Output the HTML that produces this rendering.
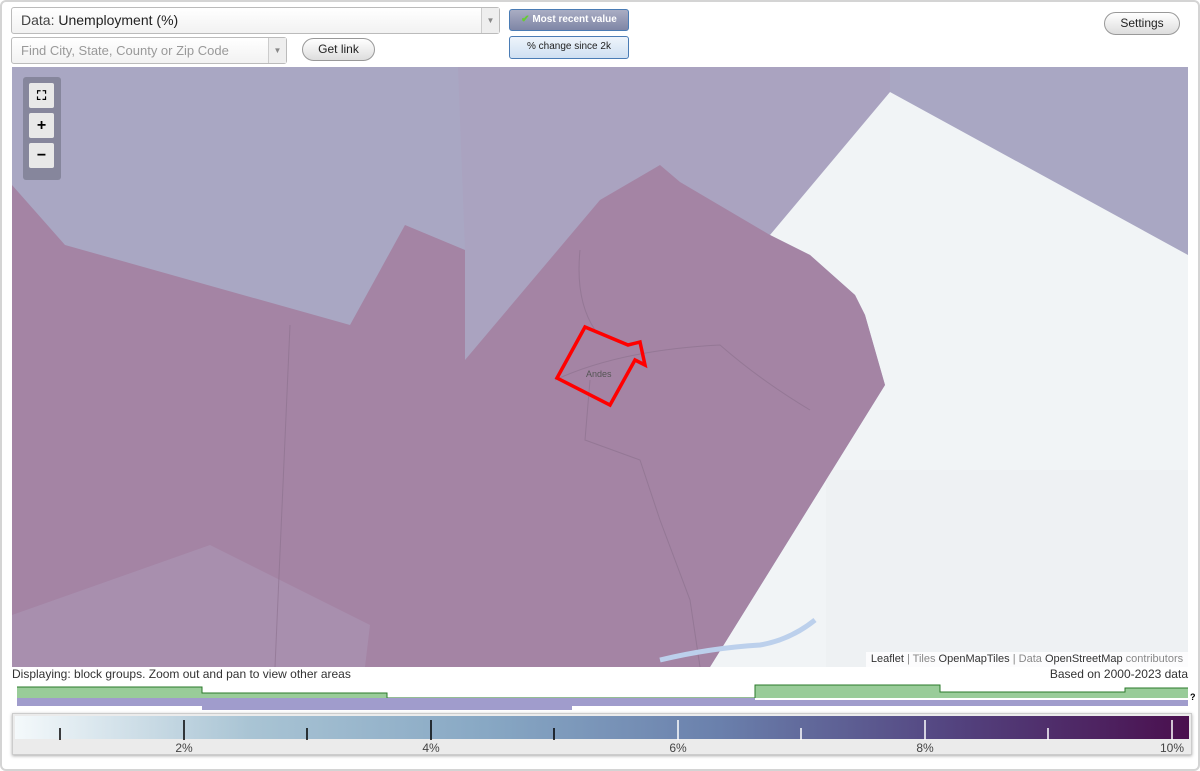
<!DOCTYPE html>
<html><head><style>
*{box-sizing:border-box;margin:0;padding:0}
body{width:1200px;height:771px;background:#fff;font-family:"Liberation Sans",sans-serif;position:relative;overflow:hidden}
.frame{position:absolute;left:0;top:0;width:1200px;height:771px;border:2px solid #d4d4d4;border-radius:6px}
.sel{position:absolute;border:1px solid #bbb;border-radius:3px;background:linear-gradient(#fff,#f2f2f2);color:#444;font-size:14px;padding-left:9px;line-height:25px}
.sel .arr{position:absolute;right:0;top:0;bottom:0;width:18px;border-left:1px solid #ccc;background:#eee;color:#888;font-size:8px;text-align:center}
.btn{position:absolute;border:1px solid #999;border-radius:12px;background:linear-gradient(#fff,#ddd);font-size:12px;text-align:center;color:#222}
.tb{position:absolute;border:1px solid #4a7cb5;border-radius:3px;font-size:10px;text-align:center;line-height:20px}
.ctrl{position:absolute;left:23px;top:77px;width:38px;height:103px;background:rgba(120,120,140,.7);border-radius:3px}
.ctrl div{position:absolute;left:6px;width:25px;height:25px;background:#e8e8e8;border-radius:2px;font-weight:bold;text-align:center;line-height:25px;font-size:16px}
</style></head><body>
<div class="frame"></div>
<div class="sel" style="left:11px;top:7px;width:489px;height:27px;font-size:14px">Data: <span style="color:#222">Unemployment (%)</span><div class="arr" style="line-height:25px">▼</div></div>
<div class="sel" style="left:11px;top:37px;width:276px;height:27px;color:#999;font-size:13px">Find City, State, County or Zip Code<div class="arr">▼</div></div>
<div class="btn" style="left:302px;top:38px;width:73px;height:23px;line-height:21px">Get link</div>
<div class="tb" style="left:509px;top:9px;width:120px;height:22px;background:linear-gradient(#a9adc3,#7f86a6);color:#fff;font-weight:bold"><span style="color:#6c3">✔</span> Most recent value</div>
<div class="tb" style="left:509px;top:36px;width:120px;height:23px;background:linear-gradient(#eef4fb,#cfe0f2);color:#222">% change since 2k</div>
<div class="btn" style="left:1104px;top:12px;width:76px;height:23px;line-height:21px">Settings</div>
<svg style="position:absolute;left:12px;top:67px" width="1176" height="600" viewBox="12 67 1176 600">
<rect x="12" y="67" width="1176" height="600" fill="#a9a7c3"/>
<polygon points="458,67 890,67 890,92 770,235 680,182 600,200 465,360 465,250" fill="#aaa3c0"/>
<polygon points="890,92 1188,255 1188,667 710,667 885,385 865,315 855,295 810,255 770,235" fill="#f1f4f6"/>
<polygon points="826,470 1188,470 1188,667 826,667" fill="#eceff1" opacity=".6"/>
<polygon points="12,185 65,245 350,325 405,225 465,250 465,360 600,200 660,165 680,182 770,235 810,255 855,295 865,315 885,385 710,667 12,667" fill="#a484a4"/>
<polygon points="12,615 210,545 370,625 365,667 12,667" fill="#a88fae"/>
<path d="M580,250 Q575,300 595,330 M590,380 L585,440 L640,460 L660,520 L690,600 L700,667 M290,325 L275,667 M555,380 Q620,350 720,345 Q760,380 810,410" stroke="#8a6f8c" fill="none" stroke-width="1" opacity=".6"/>
<path d="M660,660 Q710,648 760,645 Q790,640 815,620" stroke="#bcd0ec" stroke-width="5" fill="none"/>
<polygon points="585,327 628,345 640,342 645,365 635,360 610,405 557,378" fill="none" stroke="#f00" stroke-width="3.5"/>
<text x="586" y="377" font-size="9" fill="#555" font-family="Liberation Sans">Andes</text>
</svg>
<div class="ctrl"><div style="top:6px;font-size:13px">⛶</div><div style="top:36px">+</div><div style="top:66px">−</div></div>
<div style="position:absolute;left:866px;top:652px;width:322px;height:15px;background:rgba(255,255,255,.8);font-size:11px;color:#888;text-align:center;line-height:15px"><b style="color:#333;font-weight:normal">Leaflet</b> | Tiles <span style="color:#333">OpenMapTiles</span> | Data <span style="color:#333">OpenStreetMap</span> contributors</div>
<div style="position:absolute;left:12px;top:667px;font-size:12px;color:#333">Displaying: block groups. Zoom out and pan to view other areas</div>
<div style="position:absolute;right:12px;top:667px;font-size:12px;color:#333">Based on 2000-2023 data</div>
<svg style="position:absolute;left:0;top:680px" width="1200" height="35">
<path d="M17,7 H202 V13 H387 V18 H755 V5 H940 V12 H1125 V8 H1188 V18 H17Z" fill="#9c9"/>
<path d="M17,7 H202 V13 H387 V18 H755 V5 H940 V12 H1125 V8 H1188" stroke="#2a7a2a" fill="none"/>
<rect x="17" y="18" width="1171" height="8" fill="#a09ccc"/>
<rect x="202" y="26" width="370" height="4" fill="#a09ccc"/>
<rect x="755" y="18" width="433" height="2" fill="#fff"/>
<text x="1190" y="20" font-size="9" font-weight="bold" font-family="Liberation Sans">?</text>
</svg>
<div style="position:absolute;left:12px;top:713px;width:1180px;height:42px;border:1px solid #ccc;background:#ebebeb;box-shadow:0 1px 3px #aaa">
<div style="position:absolute;left:2px;top:2px;width:1174px;height:23px;background:linear-gradient(90deg,#f4f9fb,#a9c4d4 20%,#88a8c4 40%,#6a80ac 60%,#53437f 80%,#4a0f4e)"></div>
<svg style="position:absolute;left:0;top:0" width="1180" height="40">
<g stroke-width="1.5"><line x1="47" y1="14" x2="47" y2="26" stroke="#000"/><line x1="171" y1="6" x2="171" y2="26" stroke="#000"/><line x1="294" y1="14" x2="294" y2="26" stroke="#000"/><line x1="418" y1="6" x2="418" y2="26" stroke="#000"/><line x1="541" y1="14" x2="541" y2="26" stroke="#000"/><line x1="665" y1="6" x2="665" y2="26" stroke="#fff"/><line x1="788" y1="14" x2="788" y2="26" stroke="#fff"/><line x1="912" y1="6" x2="912" y2="26" stroke="#fff"/><line x1="1035" y1="14" x2="1035" y2="26" stroke="#fff"/><line x1="1159" y1="6" x2="1159" y2="26" stroke="#fff"/></g>
<g font-size="12" fill="#444" font-family="Liberation Sans" text-anchor="middle"><text x="171" y="38">2%</text><text x="418" y="38">4%</text><text x="665" y="38">6%</text><text x="912" y="38">8%</text><text x="1159" y="38">10%</text></g>
</svg></div>
</body></html>
